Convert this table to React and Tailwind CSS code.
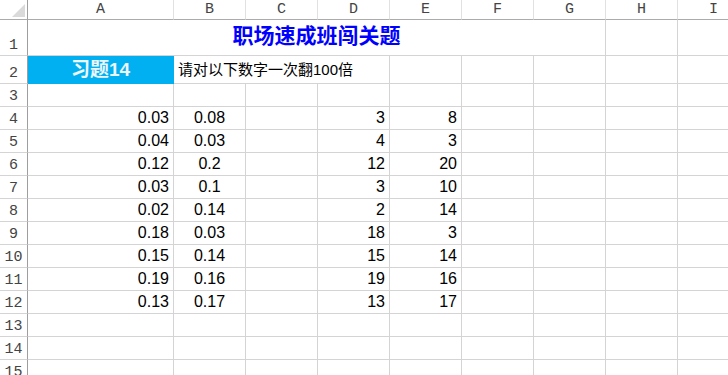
import React from "react";

const COLS = ["A", "B", "C", "D", "E", "F", "G", "H", "I"];

const colA = ["0.03", "0.04", "0.12", "0.03", "0.02", "0.18", "0.15", "0.19", "0.13"];
const colB = ["0.08", "0.03", "0.2", "0.1", "0.14", "0.03", "0.14", "0.16", "0.17"];
const colD = ["3", "4", "12", "3", "2", "18", "15", "19", "13"];
const colE = ["8", "3", "20", "10", "14", "3", "14", "16", "17"];

const cell = "border-r border-b border-[#d4d4d4] flex items-end pb-[3px] overflow-hidden whitespace-nowrap";
const num = "font-['Liberation_Sans',sans-serif] text-[16px] leading-none text-black";
const rowHead =
  "border-r border-r-[#9e9e9e] border-b border-b-[#d4d4d4] bg-white flex items-end justify-center pb-[2px] font-['Liberation_Mono',monospace] text-[15px] leading-none text-[#444]";

function RowHead({ n }) {
  return <div className={rowHead}>{n}</div>;
}

export default function App() {
  const dataRows = colA.map((a, i) => (
    <React.Fragment key={i}>
      <RowHead n={i + 4} />
      <div className={`${cell} justify-end pr-[4px] ${num}`}>{a}</div>
      <div className={`${cell} justify-center ${num}`}>{colB[i]}</div>
      <div className={cell} />
      <div className={`${cell} justify-end pr-[4px] ${num}`}>{colD[i]}</div>
      <div className={`${cell} justify-end pr-[4px] ${num}`}>{colE[i]}</div>
      <div className={cell} />
      <div className={cell} />
      <div className={cell} />
      <div className={cell} />
    </React.Fragment>
  ));

  const renderEmpty = (n) => (
    <React.Fragment key={n}>
      <RowHead n={n} />
      {COLS.map((c) => (
        <div key={c} className={cell} />
      ))}
    </React.Fragment>
  );

  return (
    <div className="w-[728px] h-[375px] overflow-hidden bg-white">
      <div className="grid w-[750px] grid-cols-[28px_146px_72px_72px_72px_72px_72px_72px_72px_72px] grid-rows-[20px_36px_28px_repeat(13,23px)]">
        {/* column headers */}
        <div className="relative border-r border-r-[#9e9e9e] border-b border-b-[#ababab] bg-white">
          <svg className="absolute left-[12px] top-[4px]" width="13" height="13" viewBox="0 0 13 13">
            <polygon points="13,0 13,13 0,13" fill="#dadada" />
          </svg>
        </div>
        {COLS.map((c) => (
          <div
            key={c}
            className="border-r border-r-[#e1e1e1] border-b border-b-[#ababab] bg-white flex items-center justify-center font-['Liberation_Mono',monospace] text-[15px] leading-none text-[#444]"
          >
            {c}
          </div>
        ))}

        {/* row 1 */}
        <RowHead n={1} />
        <div className="col-span-7 border-r border-b border-[#d4d4d4] flex items-center justify-center pb-[7px] font-['Noto_Sans_CJK_SC',sans-serif] text-[21px] font-bold leading-none text-[#0000ff]">
          职场速成班闯关题
        </div>
        <div className={cell} />
        <div className={cell} />

        {/* row 2 */}
        <RowHead n={2} />
        <div className="bg-[#00b0f0] border-r border-b border-[#00b0f0] flex items-center justify-center font-['Liberation_Sans','Noto_Sans_CJK_SC',sans-serif] text-[19px] font-bold leading-none text-[#eef5fb]">
          习题14
        </div>
        <div className="col-span-3 border-r border-b border-[#d4d4d4] flex items-center pl-[4px] font-['Liberation_Sans','Noto_Sans_CJK_SC',sans-serif] text-[15px] leading-none text-black whitespace-nowrap">
          请对以下数字一次翻100倍
        </div>
        <div className={cell} />
        <div className={cell} />
        <div className={cell} />
        <div className={cell} />
        <div className={cell} />

        {renderEmpty(3)}
        {dataRows}
        {[13, 14, 15, 16].map(renderEmpty)}
      </div>
    </div>
  );
}
